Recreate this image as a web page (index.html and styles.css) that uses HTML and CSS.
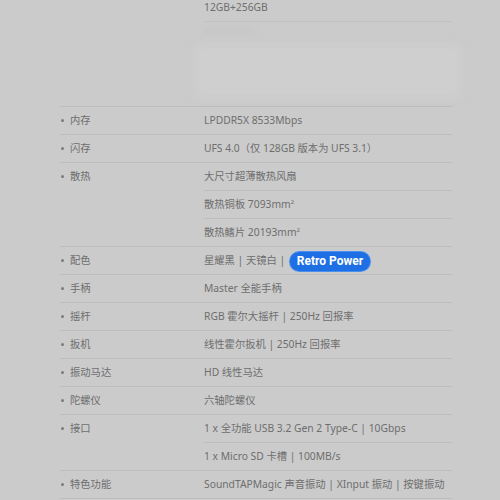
FILE: index.html
```html
<!DOCTYPE html>
<html lang="zh-CN">
<head>
<meta charset="UTF-8" />
<meta name="viewport" content="width=device-width, initial-scale=1" />
<title>规格参数</title>
<link rel="stylesheet" href="styles.css">
</head>
<body>
<div class="specs">

    <!-- Хвост предыдущего блока (存储) -->
    <div class="spec-row spec-row-top">
        <div class="spec-label"></div>
        <div class="spec-values">
            <div class="spec-value">12GB+256GB</div>
            <div class="spec-faded">
                <div class="faded-line"></div>
                <div class="faded-box"></div>
            </div>
        </div>
    </div>

    <div class="spec-row">
        <div class="spec-label">内存</div>
        <div class="spec-values">
            <div class="spec-value">LPDDR5X 8533Mbps</div>
        </div>
    </div>

    <div class="spec-row">
        <div class="spec-label">闪存</div>
        <div class="spec-values">
            <div class="spec-value">UFS 4.0（仅 128GB 版本为 UFS 3.1）</div>
        </div>
    </div>

    <div class="spec-row">
        <div class="spec-label">散热</div>
        <div class="spec-values">
            <div class="spec-value">大尺寸超薄散热风扇</div>
            <div class="spec-value">散热铜板 7093mm<sup>2</sup></div>
            <div class="spec-value">散热鳍片 20193mm<sup>2</sup></div>
        </div>
    </div>

    <div class="spec-row">
        <div class="spec-label">配色</div>
        <div class="spec-values">
            <div class="spec-value">星耀黑 | 天镜白 | <span class="highlight">Retro Power</span></div>
        </div>
    </div>

    <div class="spec-row">
        <div class="spec-label">手柄</div>
        <div class="spec-values">
            <div class="spec-value">Master 全能手柄</div>
        </div>
    </div>

    <div class="spec-row">
        <div class="spec-label">摇杆</div>
        <div class="spec-values">
            <div class="spec-value">RGB 霍尔大摇杆 | 250Hz 回报率</div>
        </div>
    </div>

    <div class="spec-row">
        <div class="spec-label">扳机</div>
        <div class="spec-values">
            <div class="spec-value">线性霍尔扳机 | 250Hz 回报率</div>
        </div>
    </div>

    <div class="spec-row">
        <div class="spec-label">振动马达</div>
        <div class="spec-values">
            <div class="spec-value">HD 线性马达</div>
        </div>
    </div>

    <div class="spec-row">
        <div class="spec-label">陀螺仪</div>
        <div class="spec-values">
            <div class="spec-value">六轴陀螺仪</div>
        </div>
    </div>

    <div class="spec-row">
        <div class="spec-label">接口</div>
        <div class="spec-values">
            <div class="spec-value">1 x 全功能 USB 3.2 Gen 2 Type-C | 10Gbps</div>
            <div class="spec-value">1 x Micro SD 卡槽 | 100MB/s</div>
        </div>
    </div>

    <div class="spec-row">
        <div class="spec-label">特色功能</div>
        <div class="spec-values">
            <div class="spec-value">SoundTAPMagic 声音振动 | XInput 振动 | 按键振动</div>
        </div>
    </div>

</div>
</body>
</html>
```

FILE: styles.css
```css
body {
    margin: 0;
    padding: 0;
    background: #cbcbcb;
    color: #6e6e6e;
    font-family: "Noto Sans", "Noto Sans CJK SC", sans-serif;
    font-size: 10.3px;
    overflow: hidden;
}
.specs {
    width: 392px;
    margin: -6px 0 0 60px;
}
.spec-row {
    display: grid;
    grid-template-columns: 144px 1fr;
    border-bottom: 1px solid #bdbdbd;
}
.spec-label {
    position: relative;
    height: 27px;
    line-height: 27px;
    padding-left: 10px;
}
.spec-label:not(:empty)::before {
    content: "";
    position: absolute;
    left: 1px;
    top: 12px;
    width: 3px;
    height: 3px;
    border-radius: 50%;
    background: #7a7a7a;
}
.spec-value {
    height: 27px;
    line-height: 27px;
    white-space: nowrap;
}
.spec-value + .spec-value {
    border-top: 1px solid #bdbdbd;
}
.spec-value sup {
    font-size: 6px;
    line-height: 0;
    vertical-align: 4px;
}
/* Размытый блок под верхней строкой */
.spec-row-top .spec-label {
    height: auto;
}
.spec-faded {
    border-top: 1px solid #c1c1c1;
    height: 85px;
    padding-top: 6px;
    box-sizing: border-box;
}
.faded-line {
    width: 50px;
    height: 5px;
    background: #c6c6c6;
    filter: blur(2px);
}
.faded-box {
    margin: 12px -8px 0 -8px;
    height: 52px;
    background: #cfcfcf;
    filter: blur(4px);
}
.highlight {
    display: inline-block;
    margin-left: 2px;
    padding: 0 7px;
    height: 19px;
    line-height: 19px;
    border-radius: 10px;
    background: #1d6fe3;
    color: #fff;
    font-family: "Roboto", "Noto Sans", sans-serif;
    font-weight: 700;
    font-size: 12px;
    vertical-align: middle;
    box-shadow: 0 0 0 1px #4a8ef0;
}
```
